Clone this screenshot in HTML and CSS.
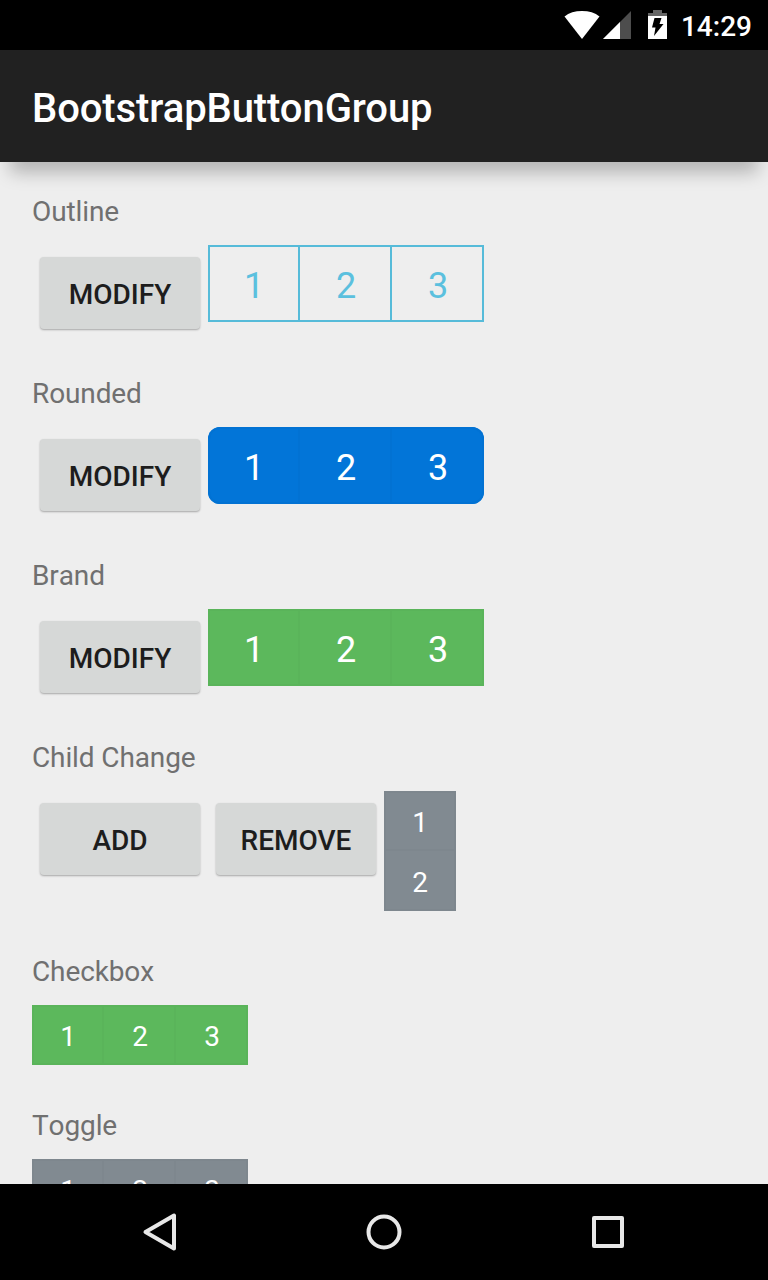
FILE: index.html
```
<!DOCTYPE html>
<html lang="en">
<head>
<meta charset="utf-8">
<title>BootstrapButtonGroup</title>
<link rel="stylesheet" href="styles.css">
</head>
<body>
<div class="screen">
  <div class="status-bar">
    <svg class="status-icons" width="104" height="32" viewBox="0 0 104 32">
      <path fill="#fff" d="M0.5 7.500C5 3.700 11 2 18 2s13 1.700 17.500 5.500L18 30z"/>
      <path fill="#4d4d4d" d="M67 2v28H39z"/>
      <path fill="#fff" d="M56 13v17H39z"/>
      <path fill="#666" d="M84 7V4h5V1h9v3h5v3z"/>
      <path fill="#fff" d="M84 7h19v23H84z"/>
      <path fill="#000" d="M90.500 9h7l-2 6h4l-9.500 12 1.500-8.500H88z"/>
    </svg>
    <span class="clock">14:29</span>
  </div>
  <header class="app-bar"><h1 class="title">BootstrapButtonGroup</h1></header>
  <main class="content">
    <section class="section">
      <h2 class="label">Outline</h2>
      <div class="row">
        <button class="raised">MODIFY</button>
        <div class="group large outline"><span class="cell">1</span><span class="cell">2</span><span class="cell">3</span></div>
      </div>
    </section>
    <section class="section">
      <h2 class="label">Rounded</h2>
      <div class="row">
        <button class="raised">MODIFY</button>
        <div class="group large primary rounded"><span class="cell">1</span><span class="cell">2</span><span class="cell">3</span></div>
      </div>
    </section>
    <section class="section">
      <h2 class="label">Brand</h2>
      <div class="row">
        <button class="raised">MODIFY</button>
        <div class="group large success"><span class="cell">1</span><span class="cell">2</span><span class="cell">3</span></div>
      </div>
    </section>
    <section class="section">
      <h2 class="label">Child Change</h2>
      <div class="row">
        <button class="raised">ADD</button>
        <button class="raised">REMOVE</button>
        <div class="group vertical secondary"><span class="cell">1</span><span class="cell">2</span></div>
      </div>
    </section>
    <section class="section">
      <h2 class="label">Checkbox</h2>
      <div class="row">
        <div class="group success"><span class="cell">1</span><span class="cell">2</span><span class="cell">3</span></div>
      </div>
    </section>
    <section class="section">
      <h2 class="label">Toggle</h2>
      <div class="row">
        <div class="group secondary"><span class="cell">1</span><span class="cell">2</span><span class="cell">3</span></div>
      </div>
    </section>
  </main>
  <nav class="nav-bar">
    <svg class="nav-icon" width="48" height="48" viewBox="0 0 48 48"><path d="M38 7.500v33L9.500 24z"/></svg>
    <svg class="nav-icon" width="48" height="48" viewBox="0 0 48 48"><circle cx="24" cy="24" r="15.500"/></svg>
    <svg class="nav-icon" width="48" height="48" viewBox="0 0 48 48"><rect x="10" y="10" width="28" height="28"/></svg>
  </nav>
</div>
</body>
</html>
```
FILE: styles.css
```
* { box-sizing: border-box; }
body { margin: 0; font-family: Roboto, "Liberation Sans", sans-serif; }
.screen {
  display: flex;
  flex-direction: column;
  width: 768px;
  height: 1280px;
  overflow: hidden;
  background: #eee;
}
.status-bar {
  display: flex;
  flex: none;
  align-items: center;
  justify-content: flex-end;
  gap: 13px;
  height: 50px;
  padding-right: 16px;
  background: #000;
}
.status-icons { margin-bottom: 1px; }
.clock {
  padding-top: 3px;
  color: #fff;
  font-size: 28px;
  font-weight: 500;
  line-height: 32px;
}
.app-bar {
  display: flex;
  flex: none;
  align-items: center;
  height: 112px;
  padding: 6px 32px 0;
  background: #212121;
}
.title {
  margin: 0;
  color: #fff;
  font-size: 40px;
  font-weight: 500;
  line-height: 48px;
  letter-spacing: -0.09px;
}
.content {
  position: relative;
  flex: 1;
  min-height: 0;
  padding: 33px 32px 0;
  overflow: hidden;
}
.content::before {
  content: "";
  position: absolute;
  top: -20px;
  left: 12px;
  right: 12px;
  height: 20px;
  box-shadow: 0 8px 18px 2px rgba(0, 0, 0, 0.26);
}
.section { margin-bottom: 44px; }
.label {
  margin: 0 0 16px;
  color: #707070;
  font-size: 28px;
  font-weight: 400;
  line-height: 34px;
  font-kerning: none;
  letter-spacing: -0.12px;
}
.row { display: flex; align-items: flex-start; }
.raised {
  width: 160px;
  height: 72px;
  margin: 12px 8px 4px;
  padding: 4px 0 0;
  border: 0;
  border-radius: 4px;
  background: #d6d8d7;
  box-shadow: 0 1px 2px rgba(0, 0, 0, 0.3);
  color: #1d1d1d;
  font: 500 28px/32px Roboto, "Liberation Sans", sans-serif;
}
.group {
  display: flex;
  color: #fff;
  font-size: 28px;
  box-shadow: inset 0 0 0 2px var(--edge);
  background: var(--fill);
}
.cell {
  display: flex;
  align-items: center;
  justify-content: center;
  width: 72px;
  height: 60px;
  padding-top: 2px;
}
.cell:not(:last-child) { box-shadow: inset -2px 0 var(--edge); }
.large { font-size: 36px; }
.large .cell { width: 92px; height: 77px; padding-top: 4px; }
.vertical { flex-direction: column; }
.vertical .cell:not(:last-child) { box-shadow: inset 0 -2px var(--edge); }
.outline { --fill: transparent; --edge: #56bbd9; color: #5bc0de; }
.primary { --fill: #0275d8; --edge: #0272d3; }
.success { --fill: #5cb85c; --edge: #5ab45a; }
.secondary { --fill: #818a91; --edge: #7e878e; }
.rounded { border-radius: 12px; }
.nav-bar {
  display: flex;
  flex: none;
  align-items: center;
  justify-content: center;
  gap: 176px;
  height: 96px;
  background: #000;
}
.nav-icon { fill: none; stroke: #e8e8e8; stroke-width: 4; stroke-linejoin: round; }
```
